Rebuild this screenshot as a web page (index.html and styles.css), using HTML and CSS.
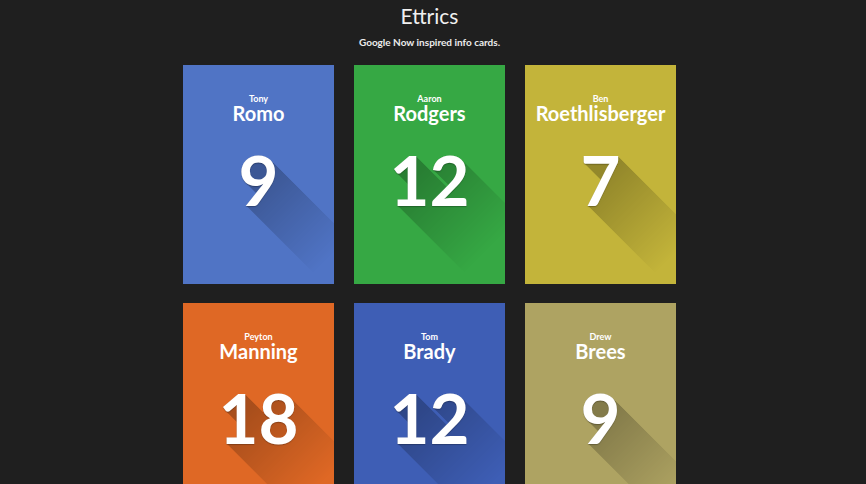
FILE: index.html
```html
<!DOCTYPE html>
<html>
<head>
<meta charset="utf-8">
<title>Ettrics</title>
<link rel="stylesheet" href="styles.css">
</head>
<body>
<div class="page">
  <header class="header">
    <h1 class="title">Ettrics</h1>
    <p class="subtitle">Google Now inspired info cards.</p>
  </header>
  <main class="grid">
    <div class="card c-blue">
      <div class="first">Tony</div>
      <div class="last">Romo</div>
      <div class="num" data-n="9">9</div>
    </div>
    <div class="card c-green">
      <div class="first">Aaron</div>
      <div class="last">Rodgers</div>
      <div class="num" data-n="12">12</div>
    </div>
    <div class="card c-yellow">
      <div class="first">Ben</div>
      <div class="last">Roethlisberger</div>
      <div class="num" data-n="7">7</div>
    </div>
    <div class="card c-orange">
      <div class="first">Peyton</div>
      <div class="last">Manning</div>
      <div class="num" data-n="18">18</div>
    </div>
    <div class="card c-navy">
      <div class="first">Tom</div>
      <div class="last">Brady</div>
      <div class="num" data-n="12">12</div>
    </div>
    <div class="card c-khaki">
      <div class="first">Drew</div>
      <div class="last">Brees</div>
      <div class="num" data-n="9">9</div>
    </div>
  </main>
</div>
</body>
</html>
```

FILE: styles.css
```css
html, body {
  margin: 0;
  padding: 0;
  background: #1f1f1f;
  overflow: hidden;
}
body {
  font-family: Lato, "Open Sans", sans-serif;
  color: #f2f2f2;
}
.page {
  width: 859px;
}
.header {
  text-align: center;
  padding-top: 4px;
}
.title {
  margin: 0;
  font-size: 21px;
  font-weight: 400;
  line-height: 24px;
  color: #f0f0f0;
}
.subtitle {
  margin: 7px 0 0;
  font-size: 10px;
  font-weight: 700;
  line-height: 14px;
  color: #ececec;
}
.grid {
  margin-top: 16px;
  display: grid;
  grid-template-columns: repeat(3, 151px);
  grid-auto-rows: 219px;
  column-gap: 20px;
  row-gap: 19px;
  justify-content: center;
}
.card {
  position: relative;
  overflow: hidden;
  isolation: isolate;
  display: flex;
  flex-direction: column;
  align-items: center;
  padding-top: 29px;
  box-sizing: border-box;
  color: #fff;
}
.c-blue { background: #5074c5; }
.c-green { background: #36a844; }
.c-yellow { background: #c3b43a; }
.c-orange { background: #df6825; }
.c-navy { background: #3e5eb5; }
.c-khaki { background: #aea362; }

.first {
  font-size: 9px;
  font-weight: 700;
  line-height: 10px;
}
.last {
  font-size: 20px;
  font-weight: 700;
  line-height: 18px;
  white-space: nowrap;
}
.num {
  position: relative;
  margin-top: 23px;
  font-size: 69px;
  font-weight: 700;
  line-height: 70px;
  color: #fff;
  text-shadow: 0 1px 1px rgba(0, 0, 0, 0.25);
}
.num::before {
  content: attr(data-n);
  position: absolute;
  z-index: -1;
  left: 0;
  top: 0;
  width: 170px;
  height: 160px;
  color: #000;
  opacity: 0.24;
  -webkit-mask-image: linear-gradient(135deg, #000 18%, rgba(0,0,0,0.55) 38%, transparent 62%);
  mask-image: linear-gradient(135deg, #000 18%, rgba(0,0,0,0.55) 38%, transparent 62%);
  text-shadow:
    1px 1px #000, 2px 2px #000, 3px 3px #000, 4px 4px #000, 5px 5px #000,
    6px 6px #000, 7px 7px #000, 8px 8px #000, 9px 9px #000, 10px 10px #000,
    11px 11px #000, 12px 12px #000, 13px 13px #000, 14px 14px #000, 15px 15px #000,
    16px 16px #000, 17px 17px #000, 18px 18px #000, 19px 19px #000, 20px 20px #000,
    21px 21px #000, 22px 22px #000, 23px 23px #000, 24px 24px #000, 25px 25px #000,
    26px 26px #000, 27px 27px #000, 28px 28px #000, 29px 29px #000, 30px 30px #000,
    31px 31px #000, 32px 32px #000, 33px 33px #000, 34px 34px #000, 35px 35px #000,
    36px 36px #000, 37px 37px #000, 38px 38px #000, 39px 39px #000, 40px 40px #000,
    41px 41px #000, 42px 42px #000, 43px 43px #000, 44px 44px #000, 45px 45px #000,
    46px 46px #000, 47px 47px #000, 48px 48px #000, 49px 49px #000, 50px 50px #000,
    51px 51px #000, 52px 52px #000, 53px 53px #000, 54px 54px #000, 55px 55px #000,
    56px 56px #000, 57px 57px #000, 58px 58px #000, 59px 59px #000, 60px 60px #000,
    61px 61px #000, 62px 62px #000, 63px 63px #000, 64px 64px #000, 65px 65px #000,
    66px 66px #000, 67px 67px #000, 68px 68px #000, 69px 69px #000, 70px 70px #000,
    71px 71px #000, 72px 72px #000, 73px 73px #000, 74px 74px #000, 75px 75px #000,
    76px 76px #000, 77px 77px #000, 78px 78px #000, 79px 79px #000, 80px 80px #000;
}
```
